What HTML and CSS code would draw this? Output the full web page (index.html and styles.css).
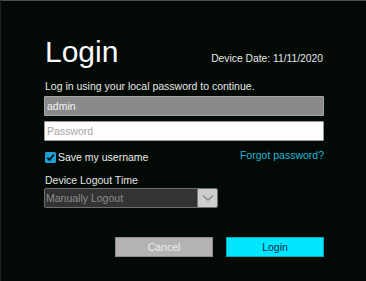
FILE: index.html
```html
<!DOCTYPE html>
<html>
<head>
<meta charset="utf-8">
<link rel="stylesheet" href="styles.css">
</head>
<body>
<div class="screen">
  <div class="panel">
    <div class="header">
      <h1 class="title">Login</h1>
      <span class="date">Device Date: 11/11/2020</span>
    </div>
    <p class="intro">Log in using your local password to continue.</p>
    <div class="field field-user">admin</div>
    <div class="field field-pass">Password</div>
    <div class="row-opts">
      <label class="save">
        <span class="check"><svg width="11" height="11" viewBox="0 0 11 11"><rect x="0" y="0" width="11" height="11" rx="1.5" fill="#1b9fd4"/><path d="M2.3 5.6 L4.5 7.9 L8.8 2.6" fill="none" stroke="#04131c" stroke-width="1.8"/></svg></span>
        <span>Save my username</span>
      </label>
      <span class="forgot">Forgot password?</span>
    </div>
    <div class="label">Device Logout Time</div>
    <div class="select">
      <span class="select-text">Manually Logout</span>
      <span class="select-btn"><svg width="12" height="8" viewBox="0 0 12 8"><path d="M1 1.5 L6 6 L11 1.5" fill="none" stroke="#8a8a8a" stroke-width="1.4"/></svg></span>
    </div>
    <div class="buttons">
      <div class="btn btn-cancel">Cancel</div>
      <div class="btn btn-login">Login</div>
    </div>
  </div>
</div>
</body>
</html>
```
FILE: styles.css
```css
html, body {
  margin: 0;
  padding: 0;
  background: #030a05;
}
.screen {
  width: 366px;
  height: 281px;
  box-sizing: border-box;
  border-top: 1px solid #4a4f4c;
  border-left: 1px solid #1e2520;
  background: #030a05;
  font-family: "Liberation Sans", Arial, sans-serif;
  color: #f2f2f2;
  overflow: hidden;
}
.panel {
  width: 280px;
  margin-left: 43px;
  padding-top: 34px;
}
.header {
  display: flex;
  justify-content: space-between;
  align-items: baseline;
  height: 34px;
}
.title {
  margin: 0 0 0 1px;
  font-size: 30px;
  font-weight: normal;
  line-height: 34px;
  color: #fafafa;
}
.date {
  font-size: 10.3px;
  color: #e6e6e6;
  margin-right: 1px;
}
.intro {
  margin: 10px 0 0 1px;
  font-size: 10.5px;
  line-height: 14px;
  color: #e8e8e8;
}
.field {
  box-sizing: border-box;
  height: 20px;
  margin-top: 3px;
  padding-left: 2px;
  font-size: 10.5px;
  line-height: 18px;
  border-radius: 1px;
}
.field-user {
  background: #8a8a8a;
  border: 1px solid #a5a5a5;
  color: #f4f4f4;
}
.field-pass {
  margin-top: 5px;
  background: #fdfdfd;
  border: 1px solid #9a9a9a;
  color: #a3a3a3;
}
.row-opts {
  display: flex;
  justify-content: space-between;
  align-items: center;
  margin-top: 9px;
  height: 14px;
}
.save {
  display: flex;
  align-items: center;
  gap: 2px;
  font-size: 10.5px;
  color: #ececec;
}
.check {
  display: flex;
  width: 11px;
  height: 11px;
  margin-left: 1px;
}
.forgot {
  font-size: 10.5px;
  color: #22b4d6;
  margin-top: -4px;
}
.label {
  margin: 10px 0 0 1px;
  font-size: 10.5px;
  line-height: 13px;
  color: #e4e4e4;
}
.select {
  display: flex;
  box-sizing: border-box;
  width: 174px;
  height: 20px;
  margin-top: 1px;
  border: 1px solid #6e6e6e;
  border-radius: 2px;
  background: #333333;
  overflow: hidden;
}
.select-text {
  flex: 1;
  padding-left: 1px;
  font-size: 10.5px;
  line-height: 18px;
  color: #8c8c8c;
}
.select-btn {
  width: 19px;
  display: flex;
  align-items: center;
  justify-content: center;
  background: #cdcdcd;
  border-left: 1px solid #777;
}
.buttons {
  display: flex;
  justify-content: flex-end;
  gap: 13px;
  margin-top: 29px;
}
.btn {
  box-sizing: border-box;
  width: 98px;
  height: 20px;
  text-align: center;
  font-size: 10.5px;
  line-height: 18px;
}
.btn-cancel {
  background: #b3b3b3;
  border: 1px solid #8c8c8c;
  color: #ececec;
}
.btn-login {
  background: #00e6ff;
  border: 1px solid #0aa9b8;
  color: #0c2740;
}
```
